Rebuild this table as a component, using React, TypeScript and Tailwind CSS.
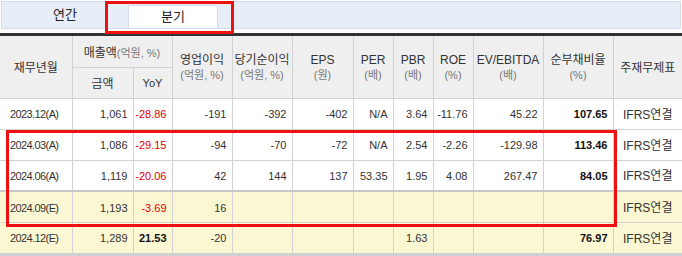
import React from 'react';

type Cell = { v: string; red?: boolean; bold?: boolean };

interface RowData {
  date: string;
  cells: Cell[];
  estimate?: boolean;
}

const c = (v: string, opts: Partial<Cell> = {}): Cell => ({ v, ...opts });

const rows: RowData[] = [
  {
    date: '2023.12(A)',
    cells: [c('1,061'), c('-28.86', { red: true }), c('-191'), c('-392'), c('-402'), c('N/A'), c('3.64'), c('-11.76'), c('45.22'), c('107.65', { bold: true })],
  },
  {
    date: '2024.03(A)',
    cells: [c('1,086'), c('-29.15', { red: true }), c('-94'), c('-70'), c('-72'), c('N/A'), c('2.54'), c('-2.26'), c('-129.98'), c('113.46', { bold: true })],
  },
  {
    date: '2024.06(A)',
    cells: [c('1,119'), c('-20.06', { red: true }), c('42'), c('144'), c('137'), c('53.35'), c('1.95'), c('4.08'), c('267.47'), c('84.05', { bold: true })],
  },
  {
    date: '2024.09(E)',
    estimate: true,
    cells: [c('1,193'), c('-3.69', { red: true }), c('16'), c(''), c(''), c(''), c(''), c(''), c(''), c('')],
  },
  {
    date: '2024.12(E)',
    estimate: true,
    cells: [c('1,289'), c('21.53', { bold: true }), c('-20'), c(''), c(''), c(''), c('1.63'), c(''), c(''), c('76.97', { bold: true })],
  },
];

const widths = [72, 61, 39, 60, 60, 61, 40, 40, 40, 70, 70, 69];

const HeadTwo = ({ top, sub }: { top: string; sub: string }) => (
  <th rowSpan={2} className="border-r border-b border-[#d2d2d2] px-0 pt-[2px] font-normal">
    <div className="text-[12px] leading-[15px] text-[#333]">{top}</div>
    <div className="text-[11px] leading-[14px] text-[#777]">{sub}</div>
  </th>
);

const App = () => {
  return (
    <div className="relative h-[256px] w-[682px] overflow-hidden bg-white pt-[1px] font-['Liberation_Sans','Noto_Sans_CJK_KR',sans-serif] text-[#333]">
      {/* tab bar */}
      <div className="mx-[1px] flex h-[28px] items-stretch border border-[#d3dced] bg-[#e8eef8]">
        <div className="flex w-[126px] items-center justify-center text-[13px] text-[#222]">연간</div>
        <div className="mt-[3px] flex w-[90px] items-center justify-center border-x border-t border-[#d3dced] bg-white text-[13px] text-[#222]">
          분기
        </div>
      </div>
      <div className="absolute left-[105px] top-[1px] h-[33px] w-[129px] border-[3px] border-[#ee1111]" />

      {/* table */}
      <div className="mt-[4px] h-[3px] bg-[#333]" />
      <table className="w-[682px] table-fixed border-collapse">
        <colgroup>
          {widths.map((w, i) => (
            <col key={i} style={{ width: w }} />
          ))}
        </colgroup>
        <thead className="bg-[#efefef]">
          <tr className="h-[31px]">
            <th rowSpan={2} className="border-r border-b border-[#d2d2d2] pt-[2px] text-[12px] font-normal text-[#333]">
              재무년월
            </th>
            <th colSpan={2} className="border-r border-b border-[#d2d2d2] pt-[2px] font-normal">
              <span className="text-[12px] text-[#333]">매출액</span>
              <span className="text-[11px] text-[#777]">(억원, %)</span>
            </th>
            <HeadTwo top="영업이익" sub="(억원, %)" />
            <HeadTwo top="당기순이익" sub="(억원, %)" />
            <HeadTwo top="EPS" sub="(원)" />
            <HeadTwo top="PER" sub="(배)" />
            <HeadTwo top="PBR" sub="(배)" />
            <HeadTwo top="ROE" sub="(%)" />
            <HeadTwo top="EV/EBITDA" sub="(배)" />
            <HeadTwo top="순부채비율" sub="(%)" />
            <th rowSpan={2} className="border-b border-[#d2d2d2] pt-[2px] text-[12px] font-normal text-[#333]">
              주재무제표
            </th>
          </tr>
          <tr className="h-[31px]">
            <th className="border-r border-b border-[#d2d2d2] pt-[2px] text-[12px] font-normal text-[#333]">금액</th>
            <th className="border-r border-b border-[#d2d2d2] pt-[2px] text-[11px] font-normal text-[#333]">YoY</th>
          </tr>
        </thead>
        <tbody>
          {rows.map((row, ri) => (
            <tr
              key={row.date}
              className={`h-[31px] ${row.estimate ? 'bg-[#fcf7d3]' : 'bg-white'} ${
                ri === 2 ? 'border-b-2 border-b-[#c8c8c8]' : 'border-b border-b-[#d2d2d2]'
              }`}
            >
              <td className="border-r border-[#d2d2d2] pl-[10px] pt-[2px] text-[11px] tracking-[-0.6px] text-[#333]">{row.date}</td>
              {row.cells.map((cell, ci) => (
                <td
                  key={ci}
                  className={`border-r border-[#d2d2d2] pr-[5px] pt-[2px] text-right text-[11px] ${
                    cell.red ? 'text-[#e40000]' : cell.bold ? 'font-bold text-[#111]' : 'text-[#333]'
                  }`}
                >
                  {cell.v}
                </td>
              ))}
              <td className="pt-[2px] text-center text-[12px] text-[#333]">IFRS연결</td>
            </tr>
          ))}
        </tbody>
      </table>
      <div className="h-[3px] bg-[#cfcfcf]" />
      <div className="absolute left-[6px] top-[130px] h-[97px] w-[611px] border-[3px] border-[#ee1111]" />
    </div>
  );
};

export default App;
